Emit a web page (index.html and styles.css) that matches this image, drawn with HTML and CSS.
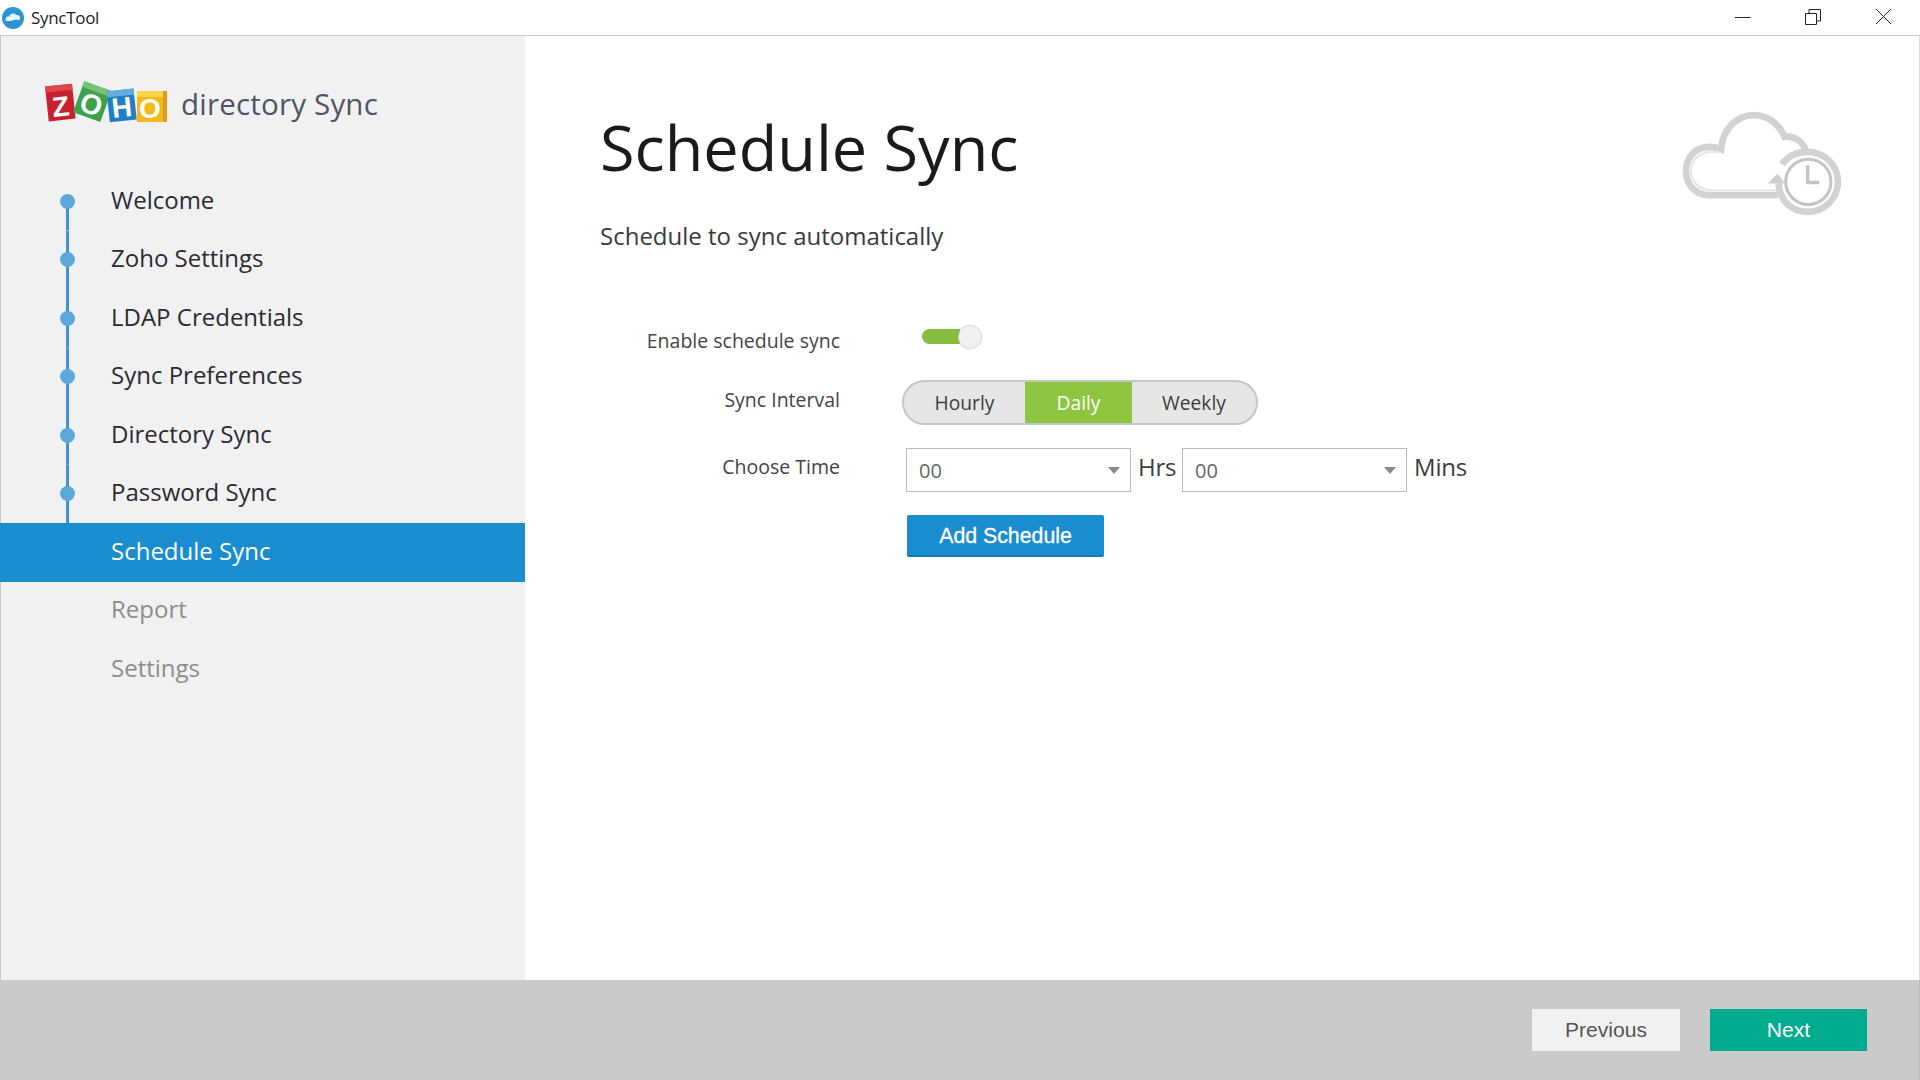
FILE: index.html
```html
<!DOCTYPE html>
<html lang="en">
<head>
<meta charset="utf-8">
<title>SyncTool</title>
<link rel="stylesheet" href="styles.css">
</head>
<body>
<div class="app">
  <header class="titlebar">
    <svg class="app-icon" viewBox="0 0 24 24" width="24" height="24" aria-hidden="true">
      <circle cx="12" cy="12" r="11" fill="#2a93d5"/>
      <path d="M5 15c-1.500-3 1-5 3-4.500C9 7.500 13 6.500 15 9c2.500-.5 5 1.500 4 4-1 1.500-3 1-4 .5-3 .5-6 2-10 1.500z" fill="#e8f3fa"/>
    </svg>
    <span class="app-name">SyncTool</span>
    <div class="controls">
      <span class="control"><svg width="16" height="16" viewBox="0 0 16 16"><path d="M0 8.500H15.500" stroke="#222" stroke-width="1" fill="none"/></svg></span>
      <span class="control"><svg width="16" height="16" viewBox="0 0 16 16"><path d="M.5 4.500H11.500V15.500H.5zM4 4.500V.5H15.500V12H11.500" stroke="#222" stroke-width="1" fill="none"/></svg></span>
      <span class="control"><svg width="17" height="17" viewBox="0 0 17 17"><path d="M1 1L16 16M16 1L1 16" stroke="#222" stroke-width="1" fill="none"/></svg></span>
    </div>
  </header>

  <div class="body">
    <aside class="sidebar">
      <div class="brand">
        <svg class="zoho" viewBox="0 0 122 42" width="122" height="42" aria-hidden="true">
          <g transform="rotate(-6 16 23)">
            <rect x="2" y="4" width="27" height="35" fill="#c9202f"/>
            <rect x="2" y="4" width="27" height="6" fill="#e0444d"/>
            <text x="15.500" y="35" class="zoho-letter">Z</text>
          </g>
          <g transform="rotate(20 47 20)">
            <rect x="33" y="4" width="29" height="33" fill="#3ea24a"/>
            <rect x="33" y="4" width="29" height="6" fill="#79c27a"/>
            <text x="47.500" y="33" class="zoho-letter">O</text>
          </g>
          <g transform="rotate(-6 76 23)">
            <rect x="63" y="9" width="27" height="31" fill="#1f7fc4"/>
            <rect x="63" y="9" width="27" height="6" fill="#62aee0"/>
            <text x="76.500" y="36" class="zoho-letter">H</text>
          </g>
          <rect x="92" y="10" width="30" height="31" fill="#f6b91c"/>
          <rect x="92" y="10" width="30" height="6" fill="#f9d648"/>
          <rect x="118" y="10" width="4" height="31" fill="#e19a22"/>
          <text x="105" y="37" class="zoho-letter">O</text>
        </svg>
        <span class="brand-name">directory Sync</span>
      </div>
      <nav class="nav">
        <a class="nav-item first"><span class="rail"><i class="dot"></i></span><span class="nav-text">Welcome</span></a>
        <a class="nav-item"><span class="rail"><i class="dot"></i></span><span class="nav-text">Zoho Settings</span></a>
        <a class="nav-item"><span class="rail"><i class="dot"></i></span><span class="nav-text">LDAP Credentials</span></a>
        <a class="nav-item"><span class="rail"><i class="dot"></i></span><span class="nav-text">Sync Preferences</span></a>
        <a class="nav-item"><span class="rail"><i class="dot"></i></span><span class="nav-text">Directory Sync</span></a>
        <a class="nav-item"><span class="rail"><i class="dot"></i></span><span class="nav-text">Password Sync</span></a>
        <a class="nav-item active"><span class="rail none"></span><span class="nav-text">Schedule Sync</span></a>
        <a class="nav-item muted"><span class="rail none"></span><span class="nav-text">Report</span></a>
        <a class="nav-item muted"><span class="rail none"></span><span class="nav-text">Settings</span></a>
      </nav>
    </aside>

    <main class="main">
      <div class="head">
        <h1 class="title">Schedule Sync</h1>
        <svg class="cloud" viewBox="125 330 486 320" width="162" height="107" aria-hidden="true">
          <path d="M415 585H210C165 585 140 550 140 512C140 470 170 440 210 440C222 440 235 442 245 447C250 385 295 345 342 345C385 345 420 372 435 410C465 405 490 425 500 450" fill="none" stroke="#d2d2d2" stroke-width="20"/>
          <path d="M415 570H215C180 570 155 545 155 510C155 475 190 445 245 458" fill="none" stroke="#e6e6e6" stroke-width="6"/>
          <path d="M428 492C450 462 480 455 505 455C555 455 596 495 596 545C596 595 555 635 505 635C455 635 420 600 418 550" fill="none" stroke="#d2d2d2" stroke-width="20"/>
          <circle cx="507" cy="545" r="68" fill="none" stroke="#c4c4c4" stroke-width="9"/>
          <path d="M385 550H437L415 520z" fill="#cfcfcf"/>
          <path d="M505 495V547H540" fill="none" stroke="#c4c4c4" stroke-width="10"/>
        </svg>
      </div>
      <p class="subtitle">Schedule to sync automatically</p>

      <form class="form">
        <label class="label">Enable schedule sync</label>
        <div class="toggle"><span class="track"></span><span class="knob"></span></div>

        <label class="label raised">Sync Interval</label>
        <div class="segments">
          <span class="seg seg-hourly">Hourly</span>
          <span class="seg seg-daily">Daily</span>
          <span class="seg seg-weekly">Weekly</span>
        </div>

        <label class="label raised">Choose Time</label>
        <div class="time">
          <div class="select"><span>00</span><i class="caret"></i></div>
          <span class="unit">Hrs</span>
          <div class="select"><span>00</span><i class="caret"></i></div>
          <span class="unit">Mins</span>
        </div>

        <span></span>
        <button class="btn-add" type="button">Add Schedule</button>
      </form>
    </main>
  </div>

  <footer class="footer">
    <button class="btn btn-prev" type="button">Previous</button>
    <button class="btn btn-next" type="button">Next</button>
  </footer>
</div>
</body>
</html>
```

FILE: styles.css
```css
* { box-sizing: border-box; }
html, body { margin: 0; height: 100%; }
body { font-family: "Open Sans", sans-serif; color: #333; background: #fff; }

.app { width: 1920px; height: 1080px; display: flex; flex-direction: column; overflow: hidden; }

.titlebar { height: 36px; flex: none; display: flex; align-items: center; background: #fff; border-bottom: 1px solid #c9c9c9; padding: 0 2px 0 1px; }
.app-icon { flex: none; }
.app-name { margin-left: 6px; font-size: 17px; letter-spacing: -.3px; color: #1c1c1c; }
.controls { margin-left: auto; display: flex; align-self: flex-start; }
.control { width: 70px; height: 33px; display: flex; align-items: center; justify-content: center; }

.body { flex: 1; display: flex; min-height: 0; }

.sidebar { width: 525px; flex: none; background: #f1f1f1; border-left: 1px solid #c9c9c9; padding-top: 45px; }
.brand { height: 42px; margin: 0 0 49px 44px; display: flex; align-items: center; gap: 14px; }
.zoho { flex: none; }
.zoho-letter { font-family: "Liberation Sans", sans-serif; font-weight: 700; font-size: 28px; fill: #fff; text-anchor: middle; }
.brand-name { font-size: 29.500px; color: #4d5566; letter-spacing: .2px; padding-top: 3px; }

.nav { display: flex; flex-direction: column; margin-left: -1px; }
.nav-item { height: 58.500px; display: flex; align-items: center; font-size: 24px; color: #2b2b33; }
.nav-text { margin-top: -4px; }
.rail { width: 15px; height: 100%; margin: 0 36px 0 60px; flex: none; display: flex; align-items: center; background: linear-gradient(#3f94d0, #3f94d0) center / 3px 100% no-repeat; }
.rail.none { background: none; }
.first .rail { background-position: center bottom; background-size: 3px 50%; }
.dot { display: block; width: 15px; height: 15px; border-radius: 50%; background: #5aa8dc; }
.nav-item.active { background: #1a8cd0; color: #fff; }
.nav-item.muted { color: #8d8d8d; }

.main { flex: 1; min-width: 0; padding: 72px 76px 0 75px; border-right: 1px solid #dedede; background: #fff; }
.head { height: 80px; display: flex; justify-content: space-between; align-items: flex-start; }
.title { margin: -1px 0 0; font-size: 63px; line-height: 80px; font-weight: 400; color: #1a1a1a; }
.cloud { flex: none; margin-top: 2px; }
.subtitle { margin: 31px 0 0; font-size: 24px; line-height: 34px; color: #3a3a3a; }

.form { margin-top: 73px; display: grid; grid-template-columns: 240px 1fr; grid-template-rows: 31px 45px 44px 42px; column-gap: 62px; row-gap: 23px; }
.label { align-self: center; text-align: right; font-size: 19.500px; line-height: 24px; color: #444; padding-bottom: 2px; }
.label.raised { padding-bottom: 6px; }

.toggle { margin-left: 20px; width: 62px; height: 24px; display: flex; align-items: center; margin-top: -1px; }
.track { width: 38px; height: 15px; border-radius: 8px 0 0 8px; background: #86bd41; margin-top: -1px; }
.knob { width: 24px; height: 24px; margin-left: -2px; border-radius: 50%; background: #f0f0f0; border: 1px solid #dcdcdc; box-shadow: 0 0 2px rgba(0,0,0,.15); }

.segments { width: 356px; height: 45px; display: flex; border: 2px solid #c6c6c6; border-radius: 23px; overflow: hidden; background: #e6e6e6; }
.seg { display: flex; align-items: center; justify-content: center; font-size: 19.200px; color: #3d3d3d; }
.seg-hourly { width: 121px; }
.seg-daily { width: 107px; background: #8cc63f; color: #fff; }
.seg-weekly { flex: 1; }

.time { margin-left: 4px; display: flex; height: 44px; }
.select { width: 225px; height: 44px; display: flex; align-items: center; justify-content: space-between; padding: 0 10px 0 12px; background: #fff; border: 1px solid #bcbcbc; font-size: 20px; color: #666; }
.caret { width: 0; height: 0; border: 6px solid transparent; border-top: 7px solid #8a8a8a; border-bottom: 0; }
.unit { font-size: 24px; line-height: 38px; color: #3d3d3d; margin: 0 7px; letter-spacing: -.2px; }
.unit:nth-child(2) { margin: 0 6px 0 7px; width: 38px; white-space: nowrap; }

.btn-add { margin-left: 5px; width: 197px; height: 42px; border: 0; border-bottom: 2px solid #1478b8; border-radius: 2px; background: #1a8cd0; color: #fff; font-family: "Liberation Sans", sans-serif; font-size: 21.300px; padding: 2px 0 0; -webkit-text-stroke: .3px #fff; }

.footer { height: 100px; flex: none; display: flex; justify-content: flex-end; gap: 30px; padding: 29px 52px 0 0; background: #cacaca; border-right: 1px solid #bdbdbd; }
.btn { height: 42px; border: 0; padding: 0; font-family: "Liberation Sans", sans-serif; font-size: 21.100px; }
.btn-prev { width: 148px; background: #f1f1f1; color: #555; }
.btn-next { width: 157px; background: #00ab8e; color: #fff; }
```
